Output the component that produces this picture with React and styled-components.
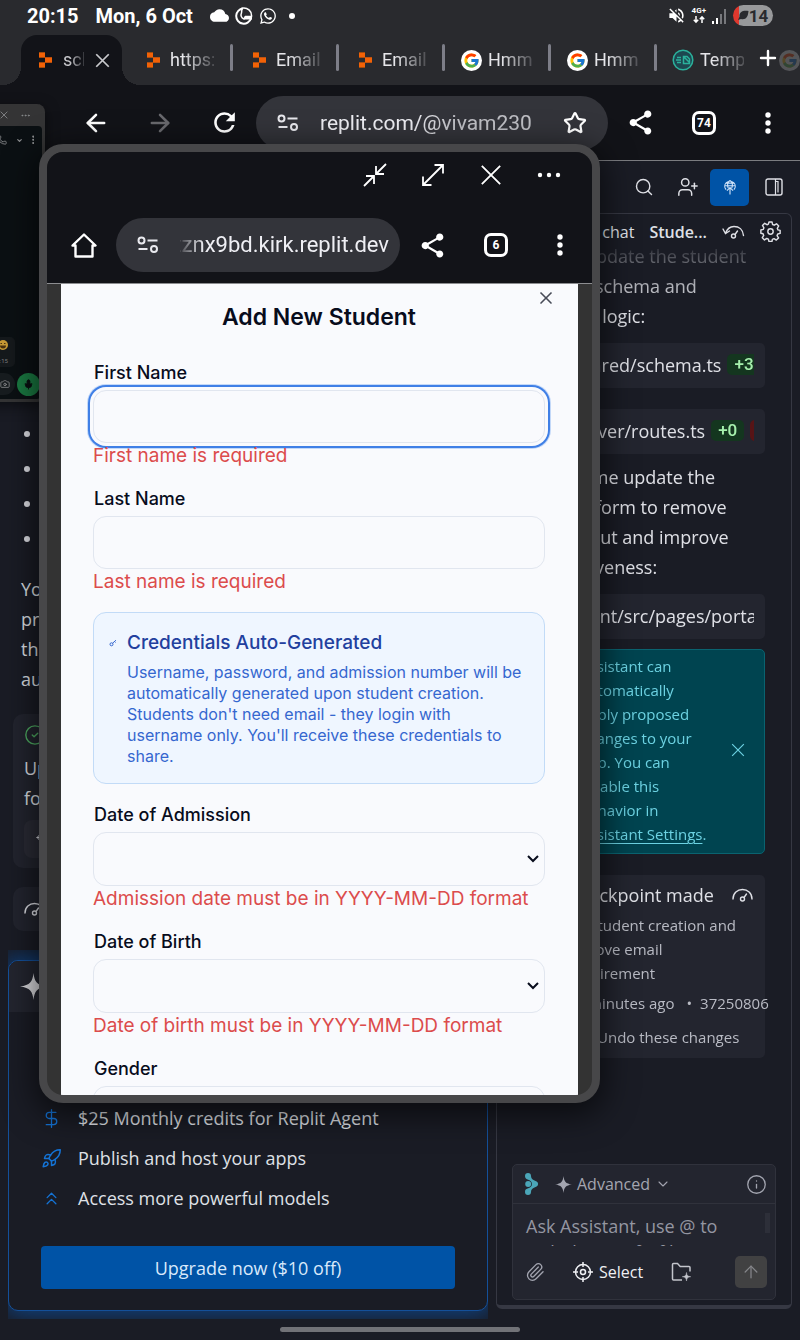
import React from "react";
import styled, { createGlobalStyle, css } from "styled-components";
import { Search, UserPlus, Paperclip, Plus, X, Info, ChevronDown, ChevronsUp, Rocket, DollarSign, ArrowUp, ArrowLeft, ArrowRight, Ellipsis, Star, Camera, Mic, Phone, CircleCheck, Undo2 } from "lucide-react";
import { MdCloud, MdShare, MdRefresh, MdVolumeOff } from "react-icons/md";
import { FaWhatsapp } from "react-icons/fa";
import { FcGoogle } from "react-icons/fc";

const ui = `Roboto, "Liberation Sans", sans-serif`;
const plex = `"Open Sans", "Noto Sans", sans-serif`;
const inter = `Inter, "Liberation Sans", sans-serif`;

const Global = createGlobalStyle`
  *, *::before, *::after { box-sizing: border-box; }
  body { margin: 0; background: #1a1c25; font-family: ${plex}; }
  button { font: inherit; color: inherit; background: none; border: 0; padding: 0; cursor: pointer; }
  input, select, textarea { font: inherit; color: inherit; margin: 0; }
  ul, p, h1, h2 { margin: 0; padding: 0; font-weight: 400; }
  svg { display: block; flex: none; }
`;

const Screen = styled.div`
  position: relative;
  min-height: 100vh;
  display: flex;
  flex-direction: column;
  overflow: hidden;
`;

/* ---------- status bar ---------- */
const StatusBar = styled.header`
  height: 35px;
  padding: 0 27px;
  display: flex;
  align-items: center;
  justify-content: space-between;
  background: #292a2e;
  color: #fff;
  font: 700 20px/24px ${ui};
`;
const StatusGroup = styled.div`
  display: flex;
  align-items: center;
  gap: ${(p) => p.$gap}px;
  padding-bottom: ${(p) => p.$lift || 0}px;
`;
const Dot = styled.i`
  width: 6px;
  height: 6px;
  margin-left: 6px;
  border-radius: 50%;
  background: #fff;
`;
const Battery = styled.span`
  display: flex;
  align-items: center;
  justify-content: center;
  width: 40px;
  height: 21px;
  border-radius: 11px;
  background: linear-gradient(90deg, #e0382e 6px, #98999b 6px);
  color: #292a2e;
  font: 700 17px/20px ${ui};
`;

/* ---------- browser chrome ---------- */
const TabStrip = styled.nav`
  height: 50px;
  padding-left: 21px;
  display: flex;
  background: #292a2e;
  overflow: hidden;
`;
const ActiveTab = styled.div`
  position: relative;
  flex: none;
  width: 101px;
  margin-right: 4px;
  padding: 0 12px 0 18px;
  display: flex;
  align-items: center;
  gap: 11px;
  background: #121318;
  border-radius: 16px 16px 0 0;
  color: #c9c9cd;
  &::before, &::after {
    content: "";
    position: absolute;
    bottom: 0;
    width: 18px;
    height: 18px;
  }
  &::before { right: 100%; background: radial-gradient(circle at 0 0, transparent 18px, #121318 18px); }
  &::after { left: 100%; background: radial-gradient(circle at 100% 0, transparent 18px, #121318 18px); }
`;
const Tab = styled.button`
  position: relative;
  flex: none;
  width: 106px;
  padding-left: 15px;
  display: flex;
  align-items: center;
  gap: 5px;
  color: #e6e6ea;
  opacity: ${(p) => (p.$ghost ? 0.2 : 1)};
  &::after {
    content: "";
    position: absolute;
    right: -1px;
    top: 9px;
    width: 3px;
    height: 27px;
    border-radius: 2px;
    background: #7d7e88;
    opacity: ${(p) => (p.$bar ? 1 : 0)};
  }
`;
const IconSlot = styled.span`
  flex: none;
  width: 24px;
  display: flex;
  justify-content: center;
`;
const TabTitle = styled.span`
  width: ${(p) => p.$w || 44}px;
  overflow: hidden;
  white-space: nowrap;
  text-align: left;
  font: 400 18px/26px ${ui};
  mask-image: linear-gradient(90deg, #000 30%, rgba(0, 0, 0, 0.2) 100%);
`;
const NewTab = styled.button`
  position: absolute;
  top: 46px;
  right: 20px;
  color: #fff;
`;
const GBadge = styled.span`
  width: 21px;
  height: 21px;
  border-radius: 50%;
  background: #fff;
  display: grid;
  place-items: center;
`;
const Toolbar = styled.div`
  height: 76px;
  padding-left: 64px;
  display: flex;
  align-items: center;
  background: #121318;
  border-bottom: 1px solid #7b7c80;
  color: #fff;
`;
const ToolButton = styled.button`
  flex: none;
  width: ${(p) => p.$w || 64}px;
  height: 54px;
  display: grid;
  place-items: center;
  color: ${(p) => p.$color || "#fff"};
`;
const Omnibox = styled.div`
  flex: 1;
  min-width: 0;
  height: 54px;
  padding: 0 ${(p) => p.$pad}px 0 20px;
  display: flex;
  align-items: center;
  gap: 20px;
  border-radius: 27px;
  background: #33343a;
`;
const Url = styled.span`
  flex: 1;
  min-width: 0;
  overflow: hidden;
  white-space: nowrap;
  color: #efeff4;
  font: 400 21px/32px ${ui};
  mask-image: linear-gradient(90deg, #000 40%, rgba(0, 0, 0, 0.75) 60%);
  ${(p) => p.$tail && css`
    direction: rtl;
    font-size: 22px;
    mask-image: linear-gradient(90deg, rgba(0, 0, 0, 0.1), #000 24px);
  `}
`;
const Count = styled.span`
  width: 24px;
  height: 24px;
  border: 3px solid #fff;
  border-radius: 7px;
  text-align: center;
  font: 700 12px/18px ${ui};
`;

/* ---------- workspace behind the window ---------- */
const Workspace = styled.main`
  flex: 1;
  display: grid;
  grid-template-columns: minmax(0, 1fr) 296px;
  gap: 8px;
  padding-right: 8px;
  color: #dfe0e6;
`;
const LeftPane = styled.section`
  display: flex;
  flex-direction: column;
  justify-content: flex-end;
  min-width: 0;
`;
const Bullets = styled.ul`
  list-style: none;
  padding-left: 24px;
  margin-bottom: 18px;
`;
const Bullet = styled.li`
  display: flex;
  align-items: center;
  height: 35px;
  &::before {
    content: "";
    width: 6px;
    height: 6px;
    border-radius: 50%;
    background: #dfe0e6;
  }
`;
const Prose = styled.p`
  font-size: 18px;
  line-height: 30px;
  white-space: nowrap;
`;
const Reply = styled.div`
  padding: 0 21px 20px;
`;
const NoteCard = styled.div`
  margin: 0 13px 19px;
  padding: ${(p) => p.$pad};
  display: flex;
  flex-direction: column;
  gap: 7px;
  border-radius: 10px;
  background: #22242e;
`;
const InnerChip = styled.div`
  height: 38px;
  padding-left: 11px;
  display: flex;
  align-items: center;
  border-radius: 8px;
  background: #2a2b35;
`;
const GlowArea = styled.div`
  margin-left: 8px;
  padding: 10px 0 8px;
  overflow: hidden;
`;
const UpgradeCard = styled.div`
  border: 1px solid #14509a;
  border-radius: 10px;
  background: #1a1c25;
  box-shadow: 0 0 24px 4px #0f4485;
  overflow: hidden;
`;
const UpgradeHead = styled.div`
  height: 51px;
  padding-left: 11px;
  display: flex;
  align-items: center;
  background: #23252f;
`;
const UpgradeList = styled.ul`
  list-style: none;
  padding: 86px 32px 0;
`;
const UpgradeItem = styled.li`
  display: flex;
  align-items: center;
  gap: 16px;
  height: 40px;
  font-size: 18px;
  svg { color: #1473d6; }
`;
const UpgradeButton = styled.button`
  display: block;
  width: calc(100% - 64px);
  height: 43px;
  margin: 28px 32px 21px;
  border-radius: 4px;
  background: #0053a6;
  color: #d9e9fb;
  font-size: 18px;
`;

const RightPane = styled.section`
  display: flex;
  flex-direction: column;
  padding-bottom: 10px;
`;
const PaneTools = styled.div`
  height: 52px;
  display: flex;
  align-items: center;
  justify-content: flex-end;
  padding-right: 9px;
`;
const PaneButton = styled.button`
  width: ${(p) => p.$w}px;
  display: grid;
  place-items: center;
`;
const Deploy = styled.button`
  width: 39px;
  height: 37px;
  margin-right: 16px;
  display: grid;
  place-items: center;
  border-radius: 5px;
  background: #0053a6;
`;
const Panel = styled.div`
  flex: 1;
  display: flex;
  flex-direction: column;
  border: 1px solid #363843;
  border-bottom-width: 4px;
  border-radius: 6px;
`;
const PanelTabs = styled.div`
  height: 35px;
  padding-right: 10px;
  display: flex;
  align-items: center;
  justify-content: flex-end;
  gap: 15px;
  font-size: 16px;
  b { font-weight: 600; }
`;
const Chat = styled.div`
  margin-top: -8px;
  padding: 0 26px;
  mask-image: linear-gradient(180deg, rgba(0, 0, 0, 0.1) 6px, rgba(0, 0, 0, 0.75) 44px, #000 70px);
  > p + div { margin-top: 12px; }
  > div + p { margin-top: 8px; }
`;
const FileCard = styled.div`
  height: 45px;
  margin-top: 21px;
  padding: 0 11px 0 14px;
  border-radius: 5px;
  background: #23252f;
`;
const FileRow = styled.div`
  height: 45px;
  padding: 0 0 2px 35px;
  display: flex;
  align-items: center;
  gap: 6px;
  overflow: hidden;
  white-space: nowrap;
  font-size: 18px;
`;
const Tag = styled.span`
  flex: none;
  padding: 0 7px;
  border-radius: 5px;
  background: ${(p) => (p.$del ? "#571416" : "#14361f")};
  color: ${(p) => (p.$del ? "#571416" : "#a6f0ad")};
  font: 500 17px/21px ${ui};
`;
const Alert = styled.div`
  margin-top: 10px;
  padding: 4px 19px 7px 56px;
  display: flex;
  align-items: center;
  justify-content: space-between;
  border: 1px solid #0a6370;
  border-radius: 5px;
  background: #004450;
  color: #6cd2e2;
  font-size: 15px;
  line-height: 24px;
  white-space: nowrap;
  a { color: inherit; text-underline-offset: 3px; }
`;
const Checkpoint = styled.div`
  height: 183px;
  margin-top: 21px;
  padding: 2px 11px 0 44px;
  border-radius: 5px;
  background: #23252f;
  color: #b9bbc4;
  font-size: 15px;
  line-height: 24px;
  white-space: nowrap;
`;
const CheckTitle = styled.h2`
  display: flex;
  align-items: center;
  justify-content: space-between;
  color: #dfe0e6;
  font-size: 18px;
  line-height: 36px;
`;
const Meta = styled.div`
  display: flex;
  gap: 8px;
  padding: 6px 0 10px;
  span:first-child { margin-right: 4px; }
`;
const Undo = styled.button`
  display: flex;
  align-items: center;
  gap: 12px;
`;
const Composer = styled.div`
  margin: auto 15px 5px;
  border: 1px solid #30323c;
  border-radius: 5px;
  background: #23252f;
  color: #a3a5b0;
`;
const ComposerHead = styled.div`
  height: 39px;
  padding: 0 8px 0 12px;
  display: flex;
  align-items: center;
  border-bottom: 1px solid #30323c;
  font-size: 16px;
  > svg:last-child { margin-left: auto; }
`;
const ModeButton = styled.button`
  margin-left: 16px;
  display: flex;
  align-items: center;
  gap: 5px;
`;
const Ask = styled.textarea`
  display: block;
  width: calc(100% - 10px);
  height: 33px;
  margin: 9px 5px 0;
  padding: 0 8px;
  border: 0;
  outline: 0;
  resize: none;
  overflow: hidden;
  background: linear-gradient(#2d2f39, #2d2f39) right 0 top 0 / 5px 20px no-repeat;
  line-height: 26px;
  font-size: 18px;
  &::placeholder { color: #9496a1; opacity: 1; }
`;
const ComposerFoot = styled.div`
  height: 53px;
  padding: 0 8px 2px 12px;
  display: flex;
  align-items: center;
  gap: 28px;
`;
const SelectButton = styled.button`
  display: flex;
  align-items: center;
  gap: 6px;
  color: #eff0f4;
  font-size: 16px;
`;
const Send = styled.button`
  width: 32px;
  height: 32px;
  margin-left: auto;
  display: grid;
  place-items: center;
  border-radius: 5px;
  background: #414142;
  color: #85868a;
`;
const GestureArea = styled.footer`
  height: 21px;
  padding-top: 8px;
  i {
    display: block;
    width: 30%;
    height: 5px;
    margin: 0 auto;
    border-radius: 3px;
    background: #717277;
  }
`;

/* ---------- floating windows ---------- */
const ChatWindow = styled.aside`
  position: absolute;
  left: -60px;
  top: 104px;
  width: 105px;
  height: 298px;
  display: flex;
  flex-direction: column;
  border: 3px solid #343435;
  border-top: 0;
  border-radius: 8px;
  background: #343435;
  box-shadow: 0 4px 14px rgba(0, 0, 0, 0.5);
  color: #8b8d8f;
  overflow: hidden;
`;
const ChatBar = styled.div`
  height: ${(p) => p.$h}px;
  padding-right: ${(p) => p.$pr}px;
  display: flex;
  align-items: center;
  justify-content: flex-end;
  gap: ${(p) => p.$gap}px;
`;
const ChatBody = styled.div`
  flex: 1;
  display: flex;
  flex-direction: column;
  border-radius: 4px;
  background: #0b1013;
`;
const Bubble = styled.div`
  width: 60px;
  margin: auto 27px 2px auto;
  padding: 3px 7px 2px 4px;
  display: flex;
  flex-direction: column;
  align-items: flex-end;
  gap: 7px;
  border-radius: 5px;
  background: #15191c;
  color: #777a7c;
  font: 400 6px/8px ${ui};
`;
const CameraPill = styled.span`
  padding: 6px 5px 6px 30px;
  border-radius: 11px;
  background: #171c1f;
`;
const MicButton = styled.button`
  width: 23px;
  height: 23px;
  border-radius: 50%;
  display: grid;
  place-items: center;
  background: #1a7a42;
  color: #0b1013;
`;
const FloatWindow = styled.section`
  position: absolute;
  left: 39px;
  right: 200px;
  top: 144px;
  border: 8px solid #474749;
  border-radius: 24px;
  background: #333;
  overflow: hidden;
  box-shadow: 0 8px 32px 4px rgba(0, 0, 0, 0.6);
  color: #fff;
`;
const WindowHead = styled.header`
  background: #121318;
  border-bottom: 1px solid #8c8d90;
`;
const WindowControls = styled.div`
  height: 46px;
  padding-right: 14px;
  display: flex;
  align-items: center;
  justify-content: flex-end;
`;
const WindowBar = styled.div`
  padding: 20px 0 11px 5px;
  display: flex;
  align-items: center;
`;
const Viewport = styled.div`
  height: 811px;
  padding: 0 14px;
  overflow: hidden;
`;
const Dialog = styled.form`
  position: relative;
  min-height: 100%;
  padding: 17px 33px 0 32px;
  display: flex;
  flex-direction: column;
  gap: 18px;
  background: #f9fafd;
  color: #080c1c;
  font-family: ${inter};
`;
const DialogTitle = styled.h1`
  margin-bottom: 9px;
  text-align: center;
  font-size: 23px;
  font-weight: 600;
  line-height: 32px;
`;
const CloseDialog = styled.button`
  position: absolute;
  top: 4px;
  right: 22px;
  color: #474b57;
`;
const Field = styled.div`
  display: flex;
  flex-direction: column;
  label {
    margin-bottom: 4px;
    padding-left: 1px;
    font-size: 18px;
    font-weight: 500;
    line-height: 26px;
  }
`;
const fieldBox = css`
  width: 100%;
  border: 1px solid #e1e6ef;
  border-radius: 13px;
  background: #f9fafd;
  outline: 0;
`;
const TextInput = styled.input`
  ${fieldBox}
  height: 53px;
  padding: 0 16px;
  box-shadow: ${(p) => (p.$active ? "0 0 0 3px #f9fafd, 0 0 0 5px #3f7fe6, 0 0 0 6px #c3d8f8" : "none")};
`;
const SelectInput = styled.select`
  ${fieldBox}
  height: 54px;
  padding: 0 16px;
  appearance: none;
  background: #f9fafd url("data:image/svg+xml,%3Csvg xmlns='http://www.w3.org/2000/svg' width='12' height='8' fill='none' stroke='%23080c1c' stroke-width='2'%3E%3Cpath d='M1 1l5 5 5-5'/%3E%3C/svg%3E") right 5px center no-repeat;
`;
const ErrorText = styled.p`
  color: #dc4c4c;
  font-size: 19px;
  line-height: 25px;
`;
const Notice = styled.div`
  display: flex;
  gap: 10px;
  padding: 17px 15px 16px;
  border: 1px solid #c2dbf7;
  border-radius: 13px;
  background: #eff6ff;
  color: #3567cf;
  svg { margin-top: 9px; }
`;
const NoticeTitle = styled.h2`
  margin-bottom: 6px;
  color: #22409e;
  font-size: 19px;
  font-weight: 500;
  line-height: 26px;
`;
const NoticeText = styled.p`
  font-size: 16px;
  line-height: 21px;
`;

/* ---------- icons ---------- */
const ReplitLogo = () => (
  <svg width="13" height="16" viewBox="0 0 13 16">
    <path fill="#a34c0c" d="M0 0h6v5.400H0zM0 10.600h6V16H0z" />
    <path fill="#f26207" d="M0 1h6v4.400H0zM6 5.300h7v5.400H6zM0 10.600h6V15H0z" />
  </svg>
);
const Google = () => <GBadge><FcGoogle size={17} /></GBadge>;
const TempMail = () => (
  <svg width="22" height="22" viewBox="0 0 22 22" fill="none" stroke="#2bb09b" strokeWidth="1.500">
    <circle cx="11" cy="11" r="9.800" fill="#1d4750" />
    <path d="M5 8.500h4M4 11h5M5 13.500h4M11.500 7.500h3.500l2.500 2.500v4.500h-6zM12 8l5.500 5.500" />
  </svg>
);
const SiteInfo = () => (
  <svg width="24" height="18" viewBox="0 0 24 18" fill="none" stroke="#e9e9ee" strokeWidth="2">
    <circle cx="5.500" cy="4.500" r="3" /><path d="M11.500 4.500h10M2.500 13h9" /><circle cx="18" cy="13" r="3" />
  </svg>
);
const Dots = ({ s = 1 }) => (
  <svg width={6 * s} height={24 * s} viewBox="0 0 6 24" fill="currentColor">
    <circle cx="3" cy="4" r="2.700" /><circle cx="3" cy="12" r="2.700" /><circle cx="3" cy="20" r="2.700" />
  </svg>
);
const MoreDots = () => (
  <svg width="24" height="6" viewBox="0 0 24 6" fill="#fff">
    <circle cx="3" cy="3" r="2.200" /><circle cx="12" cy="3" r="2.200" /><circle cx="21" cy="3" r="2.200" />
  </svg>
);
const HomeIcon = () => (
  <svg width="26" height="26" viewBox="0 0 26 26" fill="none" stroke="#fff" strokeWidth="2.400" strokeLinejoin="round">
    <path d="M1.500 13.500 13 2.500l11.500 11H21.500V24.500h-17V13.500z" />
  </svg>
);
const Shrink = () => (
  <svg width="24" height="24" viewBox="0 0 24 24" fill="none" stroke="#fff" strokeWidth="1.800">
    <path d="M23 1 13 11M13 3v8h8M1 23l10-10M3 13h8v8" />
  </svg>
);
const Expand = () => (
  <svg width="24" height="24" viewBox="0 0 24 24" fill="none" stroke="#fff" strokeWidth="1.800">
    <path d="M2 22 22 2M13.500 2H22v8.500M10.500 22H2v-8.500" />
  </svg>
);
const Thin = ({ size = 24, w = 1.8 }) => (
  <svg width={size} height={size} viewBox="0 0 24 24" fill="none" stroke="currentColor" strokeWidth={w}>
    <path d="M2 2l20 20M22 2 2 22" />
  </svg>
);
const Gauge = ({ tick }) => (
  <svg width="23" height="16" viewBox="0 0 23 16" fill="none" stroke="currentColor" strokeWidth="1.400" strokeLinecap="round">
    <path d={tick ? "M1 5l2.500 4.500L7.500 7M3.500 9.500C5 5 8.500 2.500 12 2.500c5 0 9 3 9.500 9" : "M2 12C2 6 6.500 2.500 11.500 2.500S21 6 21 12"} />
    <circle cx="11.500" cy="12" r="2" /><path d="M13 10.500 15.500 7" />
  </svg>
);
const Sparkle = ({ size, color }) => (
  <svg width={size} height={size} viewBox="0 0 24 24" fill={color}>
    <path d="M12 0c.8 7.500 3 11 12 12-9 1-11.200 4.500-12 12-.8-7.500-3-11-12-12C9 11 11.200 7.500 12 0z" />
  </svg>
);
const GlobeUp = () => (
  <svg width="14" height="17" viewBox="0 0 16 18" fill="none" stroke="#cfe2f8" strokeWidth="1.300">
    <path d="M3.500 11.500A6 5.800 0 1 1 12.500 11.500M2 7h12M3 4h10M8 1C5 3 5 7 6 9.500M8 1c3 2 3 6 2 8.500M8 17V9M4.500 12.500 8 9l3.500 3.500" />
  </svg>
);
const SidePanel = () => (
  <svg width="18" height="18" viewBox="0 0 18 18" fill="none" stroke="currentColor" strokeWidth="1.400">
    <rect x="1" y="1" width="16" height="16" rx="2" /><path d="M10.500 1v16M10.500 3.500h2.500v11" strokeWidth="1.200" />
  </svg>
);
const Gear = () => (
  <svg width="21" height="21" viewBox="0 0 22 22" fill="none" stroke="currentColor" strokeWidth="1.500" strokeLinejoin="round">
    <path d="M9.400 1h3.200l.6 2.700 1.700.7 2.400-1.500 2.300 2.300-1.500 2.400.7 1.700 2.300.5v3.200l-2.500.6-.7 1.700 1.500 2.400-2.300 2.300-2.400-1.500-1.700.7-.5 2.300H9.400l-.6-2.500-1.700-.7-2.400 1.500-2.300-2.300 1.500-2.400-.7-1.700-2.300-.6V9.400l2.500-.6.7-1.700-1.500-2.400 2.300-2.300 2.400 1.500 1.500-.6z" />
    <circle cx="11" cy="11" r="2.800" />
  </svg>
);
const AssistantLogo = () => (
  <svg width="14" height="22" viewBox="0 0 14 22" fill="#4ba6b8">
    <path d="M0 3a3 3 0 0 1 6 0c0 2 1 3.200 3 4.200l2.600 1.200a3 3 0 0 1 0 5.200L9 14.800c-2 1-3 2.200-3 4.200a3 3 0 0 1-6 0c0-2 1-3 2.600-3.400C5.500 14.800 7 13 7 11S5.500 7.200 2.600 6.400C1 6 0 5 0 3z" />
    <circle cx="3.200" cy="11" r="3" />
  </svg>
);
const Target = () => (
  <svg width="20" height="20" viewBox="0 0 20 20" fill="none" stroke="currentColor" strokeWidth="1.500">
    <circle cx="10" cy="10" r="7.500" /><circle cx="10" cy="10" r="2.500" /><path d="M10 0v5M10 15v5M0 10h5M15 10h5" />
  </svg>
);
const FolderPlus = () => (
  <svg width="21" height="20" viewBox="0 0 21 20" fill="none" stroke="#c3c5cc" strokeWidth="1.500">
    <path d="M11 18H2.500q-1 0-1-1V2.500q0-1 1-1H6.500L9.200 4.500H18q1 0 1 1V9.500" />
    <path d="M15.500 10.500c.3 3 1.200 3.900 4.200 4.200-3 .3-3.900 1.200-4.200 4.300-.3-3.100-1.200-4-4.200-4.300 3-.3 3.900-1.200 4.200-4.200z" fill="#c3c5cc" strokeWidth="0.500" />
  </svg>
);
const Fox = () => (
  <svg width="18" height="18" viewBox="0 0 18 18" fill="none" stroke="#fff">
    <path d="M8 1.500A7.600 7.600 0 1 0 16 11.500" strokeWidth="2" /><path d="M7 1.200c5.500-1 10 2.800 9.500 8.300h-6L9 12c-3-1-3.500-4-2.500-6z" strokeWidth="1.500" /><path d="M9.500 11H17" strokeWidth="3" />
  </svg>
);
const Signal = () => (
  <svg width="15" height="16" viewBox="0 0 15 16">
    <path fill="#fff" d="M0 13h2v3H0zM4 10h2v6H4z" /><path fill="#77787c" d="M8 6h2v10H8zM12 1h2v15h-2z" />
  </svg>
);
const NetLabel = styled.span`
  display: flex;
  flex-direction: column;
  align-items: center;
  font: 700 8px/8px ${ui};
`;
const UpDown = () => (
  <svg width="12" height="9" viewBox="0 0 12 9" fill="none" stroke="#fff" strokeWidth="1.500">
    <path d="M3 1v6M.8 4.800 3 7.200l2.200-2.400M9 8V2M6.800 4.200 9 1.800l2.200 2.400" />
  </svg>
);
const Leaf = () => (
  <svg width="11" height="11" viewBox="0 0 11 11"><path fill="#292a2e" d="M10.500 1C5 0 1 2 1.500 6.500L0 10l3-1c5 1 7-2 7.500-8z" /></svg>
);
const Smiley = () => (
  <svg width="10" height="10" viewBox="0 0 10 10">
    <circle cx="5" cy="5" r="5" fill="#c79a35" /><path d="M2 5.500h6a3 3 0 0 1-6 0z" fill="#4a3210" /><path d="M2.500 3.500h1.500M6 3.500h1.500" stroke="#4a3210" />
  </svg>
);
const KeyIcon = () => (
  <svg width="8" height="8" viewBox="0 0 8 8" fill="none" stroke="#3567cf">
    <circle cx="2.500" cy="5.300" r="1.500" /><path d="M3.600 4.200 7 1.200M5.500 2.500l1 1" />
  </svg>
);

const lines = (arr) => arr.map((t, i) => <React.Fragment key={i}>{t}<br /></React.Fragment>);

const tabs = [
  { icon: <ReplitLogo />, title: "https:", bar: true },
  { icon: <ReplitLogo />, title: "Email", bar: true },
  { icon: <ReplitLogo />, title: "Email", bar: true },
  { icon: <Google />, title: "Hmm...", bar: true },
  { icon: <Google />, title: "Hmm...", bar: true },
  { icon: <TempMail />, title: "Temp" },
];

function TextField({ id, label, error, active }) {
  return (
    <Field>
      <label htmlFor={id}>{label}</label>
      <TextInput id={id} type="text" $active={active} />
      <ErrorText>{error}</ErrorText>
    </Field>
  );
}
function DateField({ id, label, error }) {
  return (
    <Field>
      <label htmlFor={id}>{label}</label>
      <SelectInput id={id} defaultValue=""><option value="" /></SelectInput>
      {error && <ErrorText>{error}</ErrorText>}
    </Field>
  );
}

export default function App() {
  return (
    <Screen>
      <Global />
      <StatusBar>
        <StatusGroup $gap={17} $lift={4}>
          <span>20:15</span>
          <span>Mon, 6 Oct</span>
          <StatusGroup $gap={6}><MdCloud size={19} /><Fox /><FaWhatsapp size={18} /><Dot /></StatusGroup>
        </StatusGroup>
        <StatusGroup $gap={6} $lift={4}>
          <MdVolumeOff size={19} />
          <NetLabel>4G+<UpDown /></NetLabel>
          <Signal />
          <Battery><Leaf />14</Battery>
        </StatusGroup>
      </StatusBar>

      <TabStrip>
        <ActiveTab>
          <ReplitLogo />
          <TabTitle $w={22}>school</TabTitle>
          <button aria-label="Close tab"><Thin size={15} w={2.8} /></button>
        </ActiveTab>
        {tabs.map((t, i) => (
          <Tab key={i} $bar={t.bar}><IconSlot>{t.icon}</IconSlot><TabTitle>{t.title}</TabTitle></Tab>
        ))}
        <Tab $ghost aria-label="Google"><IconSlot><Google /></IconSlot></Tab>
      </TabStrip>
      <NewTab aria-label="New tab"><Plus size={24} strokeWidth={2.4} /></NewTab>

      <Toolbar>
        <ToolButton aria-label="Back"><ArrowLeft size={28} strokeWidth={2.2} /></ToolButton>
        <ToolButton $color="#69696e" aria-label="Forward"><ArrowRight size={28} strokeWidth={2.2} /></ToolButton>
        <ToolButton aria-label="Reload"><MdRefresh size={31} /></ToolButton>
        <Omnibox $pad={21}>
          <SiteInfo />
          <Url>replit.com/@vivam230</Url>
          <Star size={24} strokeWidth={2.2} />
        </Omnibox>
        <ToolButton aria-label="Share"><MdShare size={29} /></ToolButton>
        <ToolButton aria-label="Tabs"><Count>74</Count></ToolButton>
        <ToolButton aria-label="Menu"><Dots /></ToolButton>
      </Toolbar>

      <Workspace>
        <LeftPane>
          <Bullets><Bullet /><Bullet /><Bullet /><Bullet /></Bullets>
          <Reply><Prose>{lines(["You", "pro", "the", "auto"])}</Prose></Reply>
          <NoteCard $pad="10px 11px">
            <CircleCheck size={22} color="#4fae63" strokeWidth={1.5} />
            <Prose>{lines(["Up", "for"])}</Prose>
            <InnerChip><Undo2 size={12} /></InnerChip>
          </NoteCard>
          <NoteCard $pad="14px 10px"><Gauge /></NoteCard>
          <GlowArea>
            <UpgradeCard>
              <UpgradeHead><Sparkle size={27} color="#dcdce0" /></UpgradeHead>
              <UpgradeList>
                <UpgradeItem><DollarSign size={21} strokeWidth={1.5} />$25 Monthly credits for Replit Agent</UpgradeItem>
                <UpgradeItem><Rocket size={21} strokeWidth={1.7} />Publish and host your apps</UpgradeItem>
                <UpgradeItem><ChevronsUp size={21} strokeWidth={1.5} />Access more powerful models</UpgradeItem>
              </UpgradeList>
              <UpgradeButton>Upgrade now ($10 off)</UpgradeButton>
            </UpgradeCard>
          </GlowArea>
        </LeftPane>

        <RightPane>
          <PaneTools>
            <PaneButton $w={44} aria-label="Search"><Search size={20} strokeWidth={1.7} /></PaneButton>
            <PaneButton $w={44} aria-label="Invite"><UserPlus size={22} strokeWidth={1.6} /></PaneButton>
            <Deploy aria-label="Deploy"><GlobeUp /></Deploy>
            <PaneButton $w={18} aria-label="Toggle panel"><SidePanel /></PaneButton>
          </PaneTools>
          <Panel>
            <PanelTabs>
              <span>New chat</span><b>Stude...</b><Gauge tick /><button aria-label="Settings"><Gear /></button>
            </PanelTabs>
            <Chat>
              <Prose>{lines(["Let me update the student", "the new schema and", "insertion logic:"])}</Prose>
              <FileCard><FileRow>shared/schema.ts<Tag>+3</Tag></FileRow></FileCard>
              <FileCard><FileRow>server/routes.ts<Tag>+0</Tag><Tag $del>-4</Tag></FileRow></FileCard>
              <Prose>{lines(["Now let me update the", "the new form to remove", "email input and improve", "responsiveness:"])}</Prose>
              <FileCard><FileRow>client/src/pages/portal</FileRow></FileCard>
              <Alert>
                <span>
                  {lines(["Assistant can", "automatically", "apply proposed", "changes to your", "app. You can", "disable this", "behavior in"])}
                  <a href="#settings">Assistant Settings</a>.
                </span>
                <button aria-label="Dismiss"><Thin size={14} w={2} /></button>
              </Alert>
              <Checkpoint>
                <CheckTitle>Checkpoint made<Gauge /></CheckTitle>
                <p>{lines(["Fix student creation and", "remove email", "requirement"])}</p>
                <Meta><span>15 minutes ago</span><span>•</span><span>37250806</span></Meta>
                <Undo><ArrowLeft size={18} />Undo these changes</Undo>
              </Checkpoint>
            </Chat>
            <Composer>
              <ComposerHead>
                <AssistantLogo />
                <ModeButton><Sparkle size={17} color="#a3a5b0" />Advanced<ChevronDown size={16} strokeWidth={1.6} /></ModeButton>
                <Info size={21} strokeWidth={1.5} />
              </ComposerHead>
              <Ask aria-label="Ask Assistant" placeholder="Ask Assistant, use @ to include specific files" />
              <ComposerFoot>
                <Paperclip size={20} strokeWidth={1.6} />
                <SelectButton><Target />Select</SelectButton>
                <FolderPlus />
                <Send aria-label="Send"><ArrowUp size={20} strokeWidth={1.5} /></Send>
              </ComposerFoot>
            </Composer>
          </Panel>
        </RightPane>
      </Workspace>
      <GestureArea><i /></GestureArea>

      <ChatWindow aria-label="Chat window">
        <ChatBar $h={22} $pr={11} $gap={12}><Thin size={8} w={2.5} /><Ellipsis size={11} /></ChatBar>
        <ChatBody>
          <ChatBar $h={28} $pr={8} $gap={9}><Phone size={10} /><ChevronDown size={7} strokeWidth={4} /><Dots s={0.4} /></ChatBar>
          <Bubble><Smiley />20:15</Bubble>
          <ChatBar $h={30} $pr={2} $gap={2}><CameraPill><Camera size={10} /></CameraPill><MicButton aria-label="Record"><Mic size={11} fill="#0b1013" /></MicButton></ChatBar>
        </ChatBody>
      </ChatWindow>

      <FloatWindow>
        <WindowHead>
          <WindowControls>
            <ToolButton $w={58} aria-label="Minimise"><Shrink /></ToolButton>
            <ToolButton $w={58} aria-label="Expand"><Expand /></ToolButton>
            <ToolButton $w={58} aria-label="Close"><Thin size={22} w={2} /></ToolButton>
            <ToolButton $w={58} aria-label="More"><MoreDots /></ToolButton>
          </WindowControls>
          <WindowBar>
            <ToolButton aria-label="Home"><HomeIcon /></ToolButton>
            <Omnibox $pad={11}><SiteInfo /><Url $tail>tznx9bd.kirk.replit.dev</Url></Omnibox>
            <ToolButton aria-label="Share"><MdShare size={29} /></ToolButton>
            <ToolButton aria-label="Tabs"><Count>6</Count></ToolButton>
            <ToolButton aria-label="Menu"><Dots /></ToolButton>
          </WindowBar>
        </WindowHead>
        <Viewport>
          <Dialog>
            <DialogTitle>Add New Student</DialogTitle>
            <CloseDialog type="button" aria-label="Close dialog"><X size={20} strokeWidth={2} /></CloseDialog>
            <TextField id="first" label="First Name" error="First name is required" active />
            <TextField id="last" label="Last Name" error="Last name is required" />
            <Notice>
              <KeyIcon />
              <div>
                <NoticeTitle>Credentials Auto-Generated</NoticeTitle>
                <NoticeText>Username, password, and admission number will be automatically generated upon student creation. Students don't need email - they login with username only. You'll receive these credentials to share.</NoticeText>
              </div>
            </Notice>
            <DateField id="admission" label="Date of Admission" error="Admission date must be in YYYY-MM-DD format" />
            <DateField id="birth" label="Date of Birth" error="Date of birth must be in YYYY-MM-DD format" />
            <DateField id="gender" label="Gender" />
          </Dialog>
        </Viewport>
      </FloatWindow>
    </Screen>
  );
}
